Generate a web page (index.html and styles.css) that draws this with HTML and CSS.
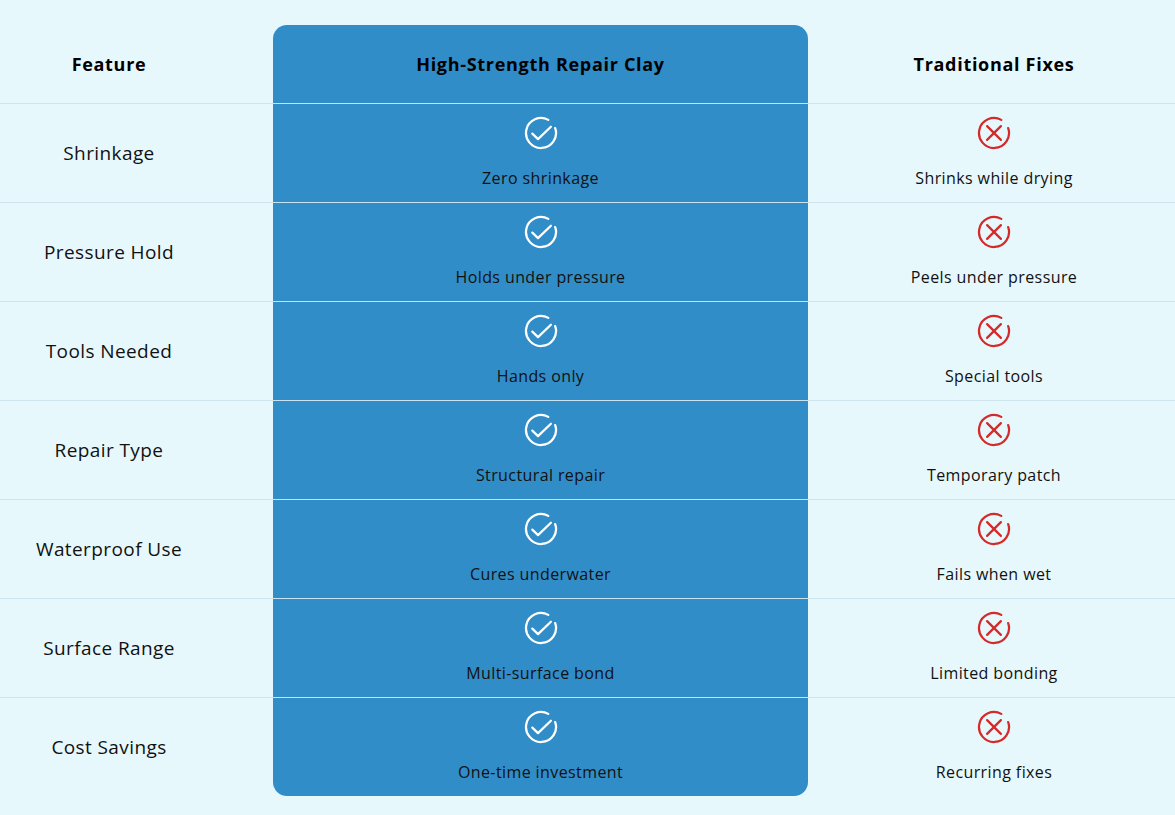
FILE: index.html
```html
<!DOCTYPE html>
<html lang="en">
<head>
<meta charset="utf-8">
<title>Comparison</title>
<link rel="stylesheet" href="styles.css">
</head>
<body>
<svg width="0" height="0" class="defs" aria-hidden="true">
  <defs>
    <symbol id="ok" viewBox="0 0 24 24">
      <path d="M21.46 8.74A10 10 0 1 1 16.85 3.25" fill="none" stroke="currentColor" stroke-width="1.5" stroke-linecap="round"/>
      <path d="M6.2 12.4L10 16.1L18.6 7.8" fill="none" stroke="currentColor" stroke-width="1.5" stroke-linecap="round" stroke-linejoin="round"/>
    </symbol>
    <symbol id="no" viewBox="0 0 24 24">
      <path d="M21.46 8.74A10 10 0 1 1 16.85 3.25" fill="none" stroke="currentColor" stroke-width="1.5" stroke-linecap="round"/>
      <path d="M7.4 7.4L16.6 16.6M16.6 7.4L7.4 16.6" fill="none" stroke="currentColor" stroke-width="1.5" stroke-linecap="round"/>
    </symbol>
  </defs>
</svg>
<main class="table">
  <div class="row head">
    <div class="cell feat">Feature</div>
    <div class="cell ours top">High-Strength Repair Clay</div>
    <div class="cell theirs">Traditional Fixes</div>
  </div>

  <div class="row">
    <div class="cell feat">Shrinkage</div>
    <div class="cell ours"><svg class="icon"><use href="#ok"/></svg><span>Zero shrinkage</span></div>
    <div class="cell theirs"><svg class="icon x"><use href="#no"/></svg><span>Shrinks while drying</span></div>
  </div>
  <div class="row">
    <div class="cell feat">Pressure Hold</div>
    <div class="cell ours"><svg class="icon"><use href="#ok"/></svg><span>Holds under pressure</span></div>
    <div class="cell theirs"><svg class="icon x"><use href="#no"/></svg><span>Peels under pressure</span></div>
  </div>
  <div class="row">
    <div class="cell feat">Tools Needed</div>
    <div class="cell ours"><svg class="icon"><use href="#ok"/></svg><span>Hands only</span></div>
    <div class="cell theirs"><svg class="icon x"><use href="#no"/></svg><span>Special tools</span></div>
  </div>
  <div class="row">
    <div class="cell feat">Repair Type</div>
    <div class="cell ours"><svg class="icon"><use href="#ok"/></svg><span>Structural repair</span></div>
    <div class="cell theirs"><svg class="icon x"><use href="#no"/></svg><span>Temporary patch</span></div>
  </div>
  <div class="row">
    <div class="cell feat">Waterproof Use</div>
    <div class="cell ours"><svg class="icon"><use href="#ok"/></svg><span>Cures underwater</span></div>
    <div class="cell theirs"><svg class="icon x"><use href="#no"/></svg><span>Fails when wet</span></div>
  </div>
  <div class="row">
    <div class="cell feat">Surface Range</div>
    <div class="cell ours"><svg class="icon"><use href="#ok"/></svg><span>Multi-surface bond</span></div>
    <div class="cell theirs"><svg class="icon x"><use href="#no"/></svg><span>Limited bonding</span></div>
  </div>
  <div class="row">
    <div class="cell feat">Cost Savings</div>
    <div class="cell ours bottom"><svg class="icon"><use href="#ok"/></svg><span>One-time investment</span></div>
    <div class="cell theirs"><svg class="icon x"><use href="#no"/></svg><span>Recurring fixes</span></div>
  </div>
</main>
</body>
</html>
```
FILE: styles.css
```css
html, body {
  margin: 0;
  padding: 0;
  background: #e7f8fd;
}
body {
  font-family: "Open Sans", "Liberation Sans", sans-serif;
  color: #111;
  width: 1175px;
  height: 815px;
  overflow: hidden;
}
.defs {
  position: absolute;
  width: 0;
  height: 0;
}
.table {
  padding-top: 25px;
}
.row {
  display: grid;
  grid-template-columns: 273px 535px 1fr;
  height: 99px;
}
.row.head {
  height: 78px;
}
.cell {
  border-top: 1px solid #cde4ec;
  display: flex;
  flex-direction: column;
  align-items: center;
  justify-content: flex-start;
  padding-top: 11px;
  gap: 15px;
  font-size: 16px;
  line-height: 24px;
  letter-spacing: 0.4px;
  box-sizing: border-box;
}
.head .cell {
  border-top: none;
  justify-content: center;
  padding-top: 0;
  font-size: 18px;
  font-weight: 700;
  letter-spacing: 0.7px;
  color: #000;
}
.cell.feat {
  padding-right: 55px;
  padding-top: 0;
  justify-content: center;
  font-size: 19px;
  letter-spacing: 0.4px;
}
.head .cell.feat {
  font-size: 18px;
  letter-spacing: 0.7px;
}
.cell.theirs {
  padding-left: 5px;
}
.cell.ours {
  background: #318dc7;
  border-top-color: rgba(255, 255, 255, 0.75);
}
.cell.ours.top {
  border-radius: 14px 14px 0 0;
}
.cell.ours.bottom {
  border-radius: 0 0 14px 14px;
}
.icon {
  width: 36px;
  height: 36px;
  color: #ffffff;
  flex: none;
}
.icon.x {
  color: #d42a2a;
}
```
